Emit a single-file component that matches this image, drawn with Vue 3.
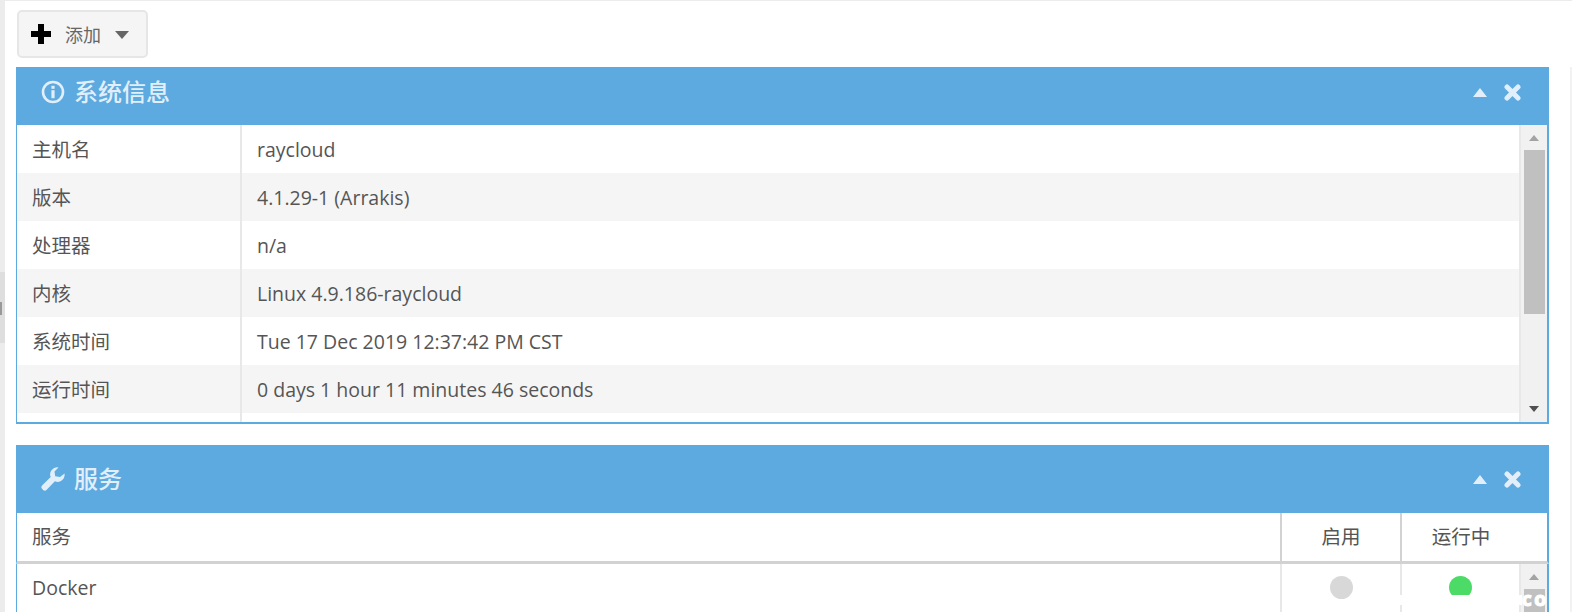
<script setup>
const infoRows = [
  { label: "主机名", value: "raycloud" },
  { label: "版本", value: "4.1.29-1 (Arrakis)" },
  { label: "处理器", value: "n/a" },
  { label: "内核", value: "Linux 4.9.186-raycloud" },
  { label: "系统时间", value: "Tue 17 Dec 2019 12:37:42 PM CST" },
  { label: "运行时间", value: "0 days 1 hour 11 minutes 46 seconds" },
  { label: "", value: "" }
];
</script>

<template>
  <div class="page">
    <div class="gutter"><span class="gutter-tab"></span></div>
    <main class="content">
      <div class="toolbar">
        <button class="add-btn">
          <svg class="plus" viewBox="0 0 20 20"><path d="M7 0h6v7h7v6h-7v7H7v-7H0V7h7z" /></svg>
          <span class="add-label">添加</span>
          <span class="caret"></span>
        </button>
      </div>

      <section class="panel">
        <header class="panel-head head-info">
          <svg class="head-icon" viewBox="0 0 24 24">
            <circle cx="12" cy="12" r="10" fill="none" stroke="currentColor" stroke-width="2.600" />
            <rect x="10.400" y="10.200" width="3.200" height="8" />
            <rect x="10.400" y="5.800" width="3.200" height="3" />
          </svg>
          <h2>系统信息</h2>
          <span class="tools">
            <span class="tool-up"></span>
            <svg class="tool-x" viewBox="0 0 17 17"><path d="M3 3 14 14M14 3 3 14" /></svg>
          </span>
        </header>
        <div class="info-body">
          <div class="info-rows">
            <div v-for="(row, i) in infoRows" :key="i" class="info-row">
              <div class="info-label">{{ row.label }}</div>
              <div class="info-value">{{ row.value }}</div>
            </div>
          </div>
          <div class="scrollbar">
            <span class="arrow-up"></span>
            <span class="thumb"></span>
            <span class="arrow-down"></span>
          </div>
        </div>
      </section>

      <section class="panel panel-services">
        <header class="panel-head head-services">
          <svg class="head-icon wrench" viewBox="0 0 24 24">
            <path d="M23.500 6.500a7 7 0 0 1-9.600 7.800L5.700 22.700a2.700 2.700 0 0 1-3.800 0l-.6-.6a2.700 2.700 0 0 1 0-3.800l8.400-8.200A7 7 0 0 1 17.500.5l-4 4 .7 4.800 4.800.7z" />
          </svg>
          <h2>服务</h2>
          <span class="tools">
            <span class="tool-up"></span>
            <svg class="tool-x" viewBox="0 0 17 17"><path d="M3 3 14 14M14 3 3 14" /></svg>
          </span>
        </header>
        <div class="svc-head">
          <div class="svc-name">服务</div>
          <div class="svc-col">启用</div>
          <div class="svc-col svc-run">运行中</div>
        </div>
        <div class="svc-row">
          <div class="svc-name">Docker</div>
          <div class="svc-col"><span class="dot dot-off"></span></div>
          <div class="svc-col"><span class="dot dot-on"></span></div>
          <div class="scrollbar">
            <span class="arrow-up"></span>
            <span class="thumb"></span>
          </div>
        </div>
      </section>
    </main>
    <div class="right-strip"></div>
    <div class="watermark"><span class="watermark-text">COM</span></div>
  </div>
</template>

<style>
html, body {
  margin: 0;
  overflow: hidden;
  background: #fff;
}
</style>

<style scoped>
.page {
  display: flex;
  position: relative;
  width: 1572px;
  height: 612px;
  overflow: hidden;
  font-family: "Open Sans", "Noto Sans CJK SC", sans-serif;
  font-size: 19.500px;
  color: #555;
  border-top: 1px solid #ececec;
  box-sizing: border-box;
}
.gutter {
  width: 5px;
  background: #ececec;
  flex: none;
  position: relative;
}
.gutter-tab {
  position: absolute;
  left: 0;
  top: 271px;
  width: 5px;
  height: 71px;
  background: #dedede;
}
.gutter-tab::after {
  content: "";
  position: absolute;
  left: 0;
  top: 30px;
  width: 2px;
  height: 13px;
  background: #999;
}
.content {
  width: 1533px;
  margin-left: 11px;
  flex: none;
}
.toolbar {
  height: 66px;
  padding: 9px 0 0 1px;
  box-sizing: border-box;
}
.add-btn {
  display: flex;
  align-items: center;
  width: 131px;
  height: 48px;
  padding: 0 0 0 12px;
  background: #f5f5f5;
  border: 2px solid #e6e6e6;
  border-radius: 5px;
  box-sizing: border-box;
  font: inherit;
  font-size: 18px;
  color: #666;
}
.plus {
  width: 20px;
  height: 20px;
  fill: #000;
  flex: none;
}
.add-label {
  margin-left: 14px;
}
.caret {
  margin-left: 14px;
  margin-top: 2px;
  border-left: 7px solid transparent;
  border-right: 7px solid transparent;
  border-top: 8px solid #666;
}
.panel-services {
  margin-top: 21px;
}
.panel-head {
  display: flex;
  align-items: center;
  background: #5caae0;
  color: #e2effa;
  padding: 0 28px 0 25px;
  box-sizing: border-box;
}
.head-info {
  height: 58px;
  padding-bottom: 8px;
}
.head-services {
  height: 68px;
}
.head-icon {
  width: 24px;
  height: 24px;
  fill: currentColor;
  flex: none;
}
.panel-head h2 {
  margin: 0 0 0 9px;
  font-size: 24px;
  line-height: 1;
  font-weight: 500;
}
.tools {
  margin-left: auto;
  display: flex;
  align-items: center;
  gap: 17px;
}
.tool-up {
  border-left: 7.500px solid transparent;
  border-right: 7.500px solid transparent;
  border-bottom: 9px solid #e2effa;
}
.tool-x {
  width: 17px;
  height: 17px;
  fill: none;
  stroke: #e2effa;
  stroke-width: 5;
  stroke-linecap: round;
}
.info-body {
  display: flex;
  height: 299px;
  border-left: 1px solid #5caae0;
  border-right: 2px solid #5caae0;
  border-bottom: 2px solid #5caae0;
  box-sizing: border-box;
  overflow: hidden;
}
.info-rows {
  flex: 1;
}
.info-row {
  display: flex;
  height: 48px;
  line-height: 50px;
}
.info-row:nth-child(even) {
  background: #f5f5f5;
}
.info-label {
  width: 225px;
  padding-left: 15px;
  border-right: 2px solid #e8e8e8;
  box-sizing: border-box;
  flex: none;
}
.info-value {
  padding-left: 15px;
}
.scrollbar {
  width: 28px;
  flex: none;
  background: #f1f1f1;
  border-left: 2px solid #e8e8e8;
  display: flex;
  flex-direction: column;
  align-items: center;
  position: relative;
  box-sizing: border-box;
}
.arrow-up {
  margin-top: 10px;
  flex: none;
  border-left: 5.500px solid transparent;
  border-right: 5.500px solid transparent;
  border-bottom: 6px solid #a3a3a3;
}
.thumb {
  width: 21px;
  margin-top: 9px;
  height: 164px;
  flex: none;
  background: #c0c0c0;
}
.arrow-down {
  position: absolute;
  bottom: 10px;
  left: 8px;
  border-left: 5.500px solid transparent;
  border-right: 5.500px solid transparent;
  border-top: 6px solid #505050;
}
.svc-head,
.svc-row {
  display: flex;
  border-left: 1px solid #5caae0;
  border-right: 2px solid #5caae0;
  line-height: 48px;
  height: 48px;
}
.svc-head {
  border-bottom: 3px solid #d2d2d2;
}
.svc-name {
  flex: 1;
  padding-left: 15px;
}
.svc-col {
  width: 120px;
  flex: none;
  box-sizing: border-box;
  text-align: center;
  border-left: 2px solid #d2d2d2;
}
.svc-run {
  width: 147px;
  padding-right: 27px;
}
.svc-row {
  overflow: hidden;
}
.svc-row .svc-col {
  border-left-color: #e8e8e8;
}
.svc-row .svc-col:nth-child(3) {
  width: 119px;
}
.dot {
  display: block;
  width: 23px;
  height: 23px;
  border-radius: 50%;
  margin: 12px auto 0;
}
.dot-off {
  background: #d8d8d8;
}
.dot-on {
  background: #4cdb66;
}
.right-strip {
  position: absolute;
  left: 1570px;
  top: 66px;
  width: 2px;
  bottom: 0;
  background: #f2f2f2;
}
.watermark {
  position: absolute;
  left: 1396px;
  top: 594px;
  width: 176px;
  height: 10px;
}
.watermark::before {
  content: "";
  position: absolute;
  left: 0;
  top: 0;
  width: 126px;
  height: 10px;
  background: #fff;
}
.watermark-text {
  position: absolute;
  left: 126px;
  top: -4px;
  font-size: 15px;
  line-height: 18px;
  font-weight: 800;
  letter-spacing: 2.500px;
  color: #fff;
  -webkit-text-stroke: 1px #fff;
}
</style>
